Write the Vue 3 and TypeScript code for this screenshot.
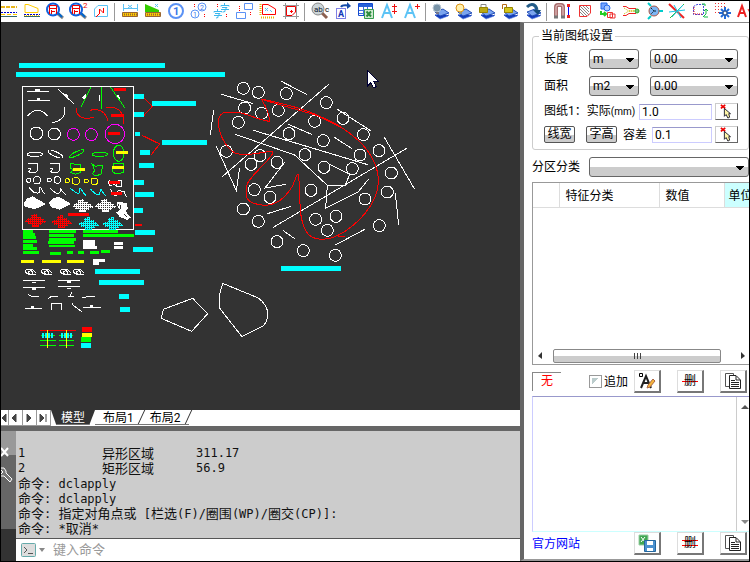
<script setup lang="ts">
import { ref } from 'vue'

interface Shape {
  d?: string
  s?: string
  f?: string
  w?: number
  dash?: string
  t?: string
  x?: number
  y?: number
  size?: number
}
interface Tool {
  name: string
  shapes: Shape[]
  sep?: boolean
}

const line = (d: string, s: string, w = 1, dash?: string): Shape => ({ d, s, w, dash })
const fill = (d: string, f: string, s?: string): Shape => ({ d, f, s })
const text = (t: string, x: number, y: number, size: number, f: string): Shape => ({ t, x, y, size, f })
const circle = (x: number, y: number, r: number) =>
  `M${x - r} ${y}a${r} ${r} 0 1 0 ${2 * r} 0a${r} ${r} 0 1 0 ${-2 * r} 0`

const layers: Shape[] = [
  fill('M4 13L12 11L17 14L9 17Z', '#1238b8', '#7d9be6'),
  fill('M4 10L12 7L18 11L9 14Z', '#7aa4ee', '#2450b8'),
  line('M4 13L9 16L18 13', '#1b47c0', 1),
]
const finder: Shape[] = [
  line('M12 11L18 16', '#888', 3),
  line('M12 10L17 15', '#06c', 2),
  fill(circle(8, 7.5, 6), '#fff', '#1461dc'),
  line(circle(8, 7.5, 6), '#1461dc', 2),
  line('M4.5 12V3.5H11.5V12M4 6.5H12M7 9.5H10M6.5 12V8', '#e00', 1),
]
const ruler: Shape[] = [
  fill('M2.5 10.5H17.5V14.5H2.5Z', '#fc0', '#963'),
  line('M4 12.5H17', '#963', 2, '1 1'),
]

const tools: Tool[] = [
  { name: '线型标注', shapes: [
    line('M2 5H18', '#e8b51c', 2, '4 1'), line('M2 10.5H18', '#00c', 1, '2 1'),
    line('M2 12.5H18', '#fc0', 1, '4 2'), line('M2 14.5H18', '#366'),
  ] },
  { name: '坡面', shapes: [
    line('M3 10.5V2.5H6L16 6.5V10.5Z', '#fc0', 1), line('M2 12.5H18', '#00c', 1, '2 1'),
    line('M2 13.5H18', '#fc0', 1, '1 1'), line('M2 14.5H18', '#366'),
  ] },
  { name: '查找面积', shapes: finder },
  { name: '查找平方', shapes: [...finder, text('2', 15, 6, 8, '#e00')] },
  { name: '编号区域', sep: true, shapes: [
    line('M3.5 14.5V7L7 3.5H16.5V14.5Z', '#5cc3f5', 1), line('M8.5 12V7L12.5 11V6', '#f00'), line('M5 15L8 12', '#f00'),
  ] },
  { name: '量长度', shapes: [
    line('M3.5 2V9M17.5 2V9M4 6.5H17M8 3L12 6M12 3L8 6', '#5cc3f5'), ...ruler,
  ] },
  { name: '量面积', shapes: [
    fill('M2 2L16 8V10H2Z', '#3c0'), line('M12 2L15 5M15 2L12 5', '#5cc3f5'), ...ruler,
  ] },
  { name: '序号', shapes: [line(circle(10, 9, 7), '#5b92f5', 2), text('1', 7, 13, 11, '#3c78e8')] },
  { name: '双序号', shapes: [
    line(circle(13, 5, 4), '#5b92f5'), line(circle(6, 12, 4), '#5b92f5'),
    text('2', 11, 8, 7, '#3c78e8'), text('1', 4, 15, 7, '#3c78e8'),
    line('M5.5 2V6M15.5 12V15', '#f00', 1, '1 1'),
  ] },
  { name: '字序', shapes: [
    line('M12.5 1V3M9 4.5V3.5H17V4.5M10 5.5H15L13 7.5V9.5L11 10M9 7.5H17', '#3cb8ee'),
    line('M5.5 7V9M2 10.5V9.5H10V10.5M3 11.5H8L6 13.5V15.5L4 16M2 13.5H10', '#3cb8ee'),
    line('M5.5 2V6M14.5 12V16', '#f00', 1, '1 1'),
  ] },
  { name: '矩形序', shapes: [
    line('M1.5 10.5H10.5V16.5H1.5ZM9.5 1.5H17.5V7.5H9.5Z', '#5b92f5'), line('M4.5 4V9M15.5 10V14', '#f00', 1, '1 1'),
  ] },
  { name: '区域边长', shapes: [
    line('M4.5 2.5H10L17.5 7V12.5H4.5Z', '#f00', 1), line('M2.5 2V14M3 15.5H17', '#e8b500', 2, '1 1'),
    line('M7 6L10 9M10 6L7 9M12 8L14 10', '#5cc3f5'),
  ] },
  { name: '裁剪框', sep: true, shapes: [
    line('M4.5 1V17M15.5 1V17M2 3.5H18M2 14.5H18', '#999', 1),
    fill('M5.5 4.5H14.5V10L11 13.5H5.5Z', '#fff', '#e00'), line('M10.5 8V11M9 9.5H12', '#f00'),
  ] },
  { name: '查找文字', shapes: [
    line('M12 11L17 16', '#8b6050', 3), fill(circle(8, 7, 6), '#ccd5d8', '#888'), text('ab', 4, 10, 8, '#123'), text('c', 15, 10, 8, '#000'),
  ] },
  { name: '移动文字', shapes: [
    line('M3.5 6.5H12.5V16.5H3.5Z', '#00c', 1, '1 1'), text('A', 5, 15, 9, '#1238b8'),
    line('M8 5C9 3 12 3 15 3.5', '#124aa8', 2), fill('M14 0L18 4L14 7Z', '#124aa8'),
  ] },
  { name: '导出表格', shapes: [
    fill('M2.5 1.5H16.5V13.5H2.5Z', '#fff', '#124ad0'), fill('M3 2H16V5H3Z', '#2862d8'),
    line('M3 8.5H16M3 11.5H16M7.5 5V13M11.5 5V13', '#3e70dd'),
    fill('M8.5 7.5H17.5V16.5H8.5Z', '#cfe8cf', '#369b4f'), line('M10.5 9.5L15 14.5M15 9.5L10.5 14.5', '#2a8a3c', 2),
  ] },
  { name: '文字上下', shapes: [line('M3 16L8 3L13 16M5 11H11', '#5cc3f5', 2), line('M15.5 2V12M13 4.5H18M13 9.5H18', '#e11')] },
  { name: '文字增大', sep: true, shapes: [line('M3 16L8 3L13 16M5 11H11', '#5cc3f5', 2), line('M15.5 2V7M13 4.5H18', '#e11')] },
  { name: '关闭图层', shapes: [...layers, fill(circle(6, 6, 4), '#7994a8', '#bac9d4'), fill('M5 10H8V12H5Z', '#778')] },
  { name: '打开图层', shapes: [...layers, fill(circle(6, 6, 4), '#fff1ad', '#dc9217'), fill('M5 10H8V12H5Z', '#997')] },
  { name: '锁定图层', shapes: [...layers, line('M4 6V2.5H9V6', '#888', 1), fill('M2.5 5.5H10.5V10.5H2.5Z', '#bba916', '#998600')] },
  { name: '解锁图层', shapes: [...layers, line('M2.5 7V2.5H6.5V6', '#b76c16', 1), fill('M4.5 5.5H12.5V10.5H4.5Z', '#d2c51b', '#998600')] },
  { name: '转换图层', sep: true, shapes: [...layers, line('M4 5C9 0 13 3 14 8', '#245c88', 3), fill('M10 8H18L15 13Z', '#124a78')] },
  { name: '磁铁', shapes: [
    line('M4 16V5Q4 3 6 3H9Q11 3 11 5V16', '#a86f6f', 4), line('M4 14V5Q4 3 6 3H9Q11 3 11 5V14', '#edcaca', 1),
    line('M2 15H6M9 15H13', '#777', 3), line('M16.5 3V15', '#00f', 1), line('M15 3.5H18M15 14.5H18', '#e22', 3),
  ] },
  { name: '填充', shapes: [
    line('M5 4L14 13M8 4L14 10M11 4L14 7M5 7L12 14M5 10L9 14', '#888'), line('M4.5 3.5H15.5V11L12 14.5H4.5Z', '#e33', 1),
  ] },
  { name: '复制图形', shapes: [
    fill('M3 1H9V7H3Z', '#75a5ff', '#246bea'), fill(circle(9, 6, 3), '#aac9ff', '#246bea'),
    line('M3 9V12H8M6 10L8 12L6 14', '#2c2', 2), line('M9.5 10.5H14.5V15.5H9.5ZM12 12H17V16H12Z', '#e33'),
  ] },
  { name: '平行线', shapes: [
    line('M2 4.5H5L8 6.5H15M2 13.5H5L8 11.5H15', '#e22', 1), line('M3 6L7 8.5H14M3 12L7 9.5H14', '#cb0', 1, '1 1'),
    fill(circle(16, 9, 2), '#7b8', '#2a2'),
  ] },
  { name: '交点', shapes: [
    line('M4 1L7 4M4 17L7 14M15 9H19', '#0cc', 2), fill(circle(10, 9, 5), '#7bb5f4', '#a54'),
    line('M7 6L10 9L7 12M10 9H13', '#123', 1, '2 1'),
  ] },
  { name: '打断', shapes: [line('M2 2L17 16', '#e22', 2), line('M17 2L3 16', '#3b3', 1), line('M2 10L18 8M7 3L14 16M16 3L5 15', '#18c8e8')] },
  { name: '旋转区域', shapes: [
    line('M3.5 4.5L7 2.5H13.5V12.5H3.5Z', '#44d', 1, '2 1'), line('M4 5V12H13', '#e22', 1, '1 1'),
    line('M12 2H15V4M16 7V12L13 15M14 15H18M16 7L14 9M16 7L18 9', '#1b4', 1),
  ] },
  { name: '炸开', shapes: [
    line('M2.5 1V12M5.5 1V12M8.5 1V8M11.5 1V5', '#e33', 1, '1 2'),
    line('M12 5V17M6 11H18M8 7L16 15M16 7L8 15', '#216bd8', 2), fill(circle(12, 11, 2), '#fff', '#247'),
  ] },
  { name: '文字', shapes: [line('M2 15L6 4L10 15M4 11H8', '#e22', 2), line('M12 7L14 11', '#e22')] },
]

const circles: number[][] = [
  [130, 55], [175, 67], [259, 71], [379, 98], [134, 114], [185, 130], [235, 121], [115, 157], [344, 154], [429, 145],
  [490, 194], [267, 191], [370, 212], [79, 244], [180, 257], [153, 283], [231, 277], [315, 254], [480, 255], [537, 242],
  [372, 292], [457, 296], [574, 309], [163, 359], [210, 382], [333, 361], [562, 366], [495, 387], [130, 417], [175, 454],
  [347, 448], [408, 439], [382, 481], [538, 467], [231, 515], [310, 542], [406, 556],
]

// x, y, width, height of the solid label bars
const cyanBars: number[][] = [
  [19, 63, 146, 5], [16, 72, 209, 5], [134, 94, 10, 5], [152, 101, 44, 5], [134, 112, 10, 5], [135, 132, 5, 4],
  [162, 140, 45, 5], [140, 150, 10, 5], [139, 163, 15, 5], [134, 180, 10, 5], [135, 192, 19, 5], [134, 208, 9, 5],
  [135, 230, 20, 5], [133, 247, 20, 5], [95, 269, 45, 5], [99, 280, 45, 5], [119, 294, 10, 5], [120, 307, 10, 5],
  [281, 266, 60, 5], [81, 343, 10, 5],
]
const greenBars: number[][] = [
  [23, 230, 10, 3], [23, 233, 12, 3], [23, 236, 13, 3], [23, 240, 14, 3], [23, 244, 10, 3], [23, 247, 14, 3], [23, 251, 16, 3],
  [49, 230, 27, 3], [49, 234, 25, 3], [49, 238, 27, 3], [48, 241, 26, 3], [49, 245, 26, 2], [50, 252, 11, 3], [67, 251, 6, 3],
  [83, 230, 35, 3], [83, 234, 51, 3], [78, 251, 6, 3], [90, 251, 9, 3], [101, 250, 9, 3], [81, 337, 10, 5],
]
const yellowBars: number[][] = [
  [21, 260, 13, 3], [42, 260, 19, 3], [67, 260, 17, 3], [116, 151, 12, 3], [112, 166, 12, 3], [73, 168, 12, 3], [82, 333, 10, 4],
]
const redBars: number[][] = [
  [114, 88, 12, 3], [111, 114, 13, 3], [108, 132, 12, 3], [109, 181, 11, 3], [111, 192, 11, 3], [68, 213, 21, 3], [135, 224, 7, 2], [82, 327, 10, 5],
]
const barGroups = [
  { color: 'cyan', bars: cyanBars }, { color: '#0f0', bars: greenBars },
  { color: '#ff0', bars: yellowBars }, { color: 'red', bars: redBars },
]
const blobs = [
  { x: 188, y: 356, color: 'white' }, { x: 256, y: 356, color: 'white' }, { x: 46, y: 401, color: 'red' },
  { x: 124, y: 405, color: 'red' }, { x: 205, y: 411, color: 'cyan' }, { x: 277, y: 411, color: 'cyan' },
]

const lengthUnit = ref('m')
const areaUnit = ref('m2')
const lengthDigits = ref('0.00')
const areaDigits = ref('0.00')
const scale = ref('1.0')
const tolerance = ref('0.1')
const append = ref(false)
const command = ref('')
const result = ref('')

const rows = [['1', '异形区域', '311.17'], ['2', '矩形区域', '56.9']]
const history = ['命令: dclapply', '命令: dclapply', '命令: 指定对角点或 [栏选(F)/圈围(WP)/圈交(CP)]:', '命令: *取消*']
const runs = (s: string) => (s.match(/[\u4e00-\u9fff]+|[^\u4e00-\u9fff]+/g) ?? []).map(t => ({ t, cjk: /[\u4e00-\u9fff]/.test(t) }))
</script>

<template>
  <div class="app">
    <div class="toolbar" role="toolbar">
      <template v-for="tool in tools" :key="tool.name">
        <button class="tool" type="button" :aria-label="tool.name">
          <svg viewBox="0 0 20 20" width="20" height="20">
            <template v-for="(p, i) in tool.shapes" :key="i">
              <text v-if="p.t" :x="p.x" :y="p.y" :font-size="p.size" :fill="p.f" :font-weight="(p.size || 0) > 8 ? 700 : 400">{{ p.t }}</text>
              <path v-else :d="p.d" :stroke="p.s || 'none'" :fill="p.f || 'none'" :stroke-width="p.w || 1" :stroke-dasharray="p.dash" />
            </template>
          </svg>
        </button>
        <i v-if="tool.sep" class="sep"></i>
      </template>
    </div>

    <div class="body">
      <main class="work">
        <div class="canvas">
          <svg class="drawing" viewBox="1 22 519 388" preserveAspectRatio="xMinYMin meet">
            <defs>
              <path id="blob" d="M0 22L9 14H17V4H27V0H34V9H47V16H56V22H62V28H50V34H40V39H19V31H7V25H0Z" />
            </defs>

            <g transform="translate(10 80) scale(.33333)">
              <path class="w" d="M38 19H371V448H38Z" />
              <path class="w" d="M51 34H117M54 61H120M144 27L191 71M268 44V63M52 109Q82 73 113 108M163 80Q171 120 127 128" />
              <path class="g" d="M242 22L214 80M274 22V87M302 22L344 83" />
              <path class="s" d="M75 27H90V34H75ZM80 54H91V60H80ZM160 42L169 41L177 48L172 52ZM217 52L228 42L230 52L222 59ZM319 45L327 46L330 57L323 52Z" />
              <path class="r" d="M198 85C199 110 217 120 251 112M240 91C270 83 290 100 293 122M288 84C325 76 343 98 341 131" />
              <path class="w" :d="circle(79, 160, 19) + circle(133, 162, 18)" />
              <path class="m" :d="circle(190, 163, 18) + circle(244, 164, 18) + circle(315, 162, 29)" />
              <g class="w">
                <ellipse cx="75" cy="223" rx="23" ry="6" /><ellipse cx="136" cy="222" rx="24" ry="7" transform="rotate(25 136 222)" />
                <path d="M55 251H83V270Q76 283 55 275L62 267L55 266M121 251H149V270Q142 283 121 275L128 267L121 266" />
                <path :d="circle(56, 301, 6) + circle(81, 301, 11) + circle(118, 300, 6) + circle(142, 300, 10)" />
                <path d="M57 322C72 337 67 338 80 339C98 342 83 322 89 322C99 322 90 332 104 341M121 324C141 348 155 343 150 325C156 327 150 332 167 343M302 328C312 350 320 354 324 332L342 334L350 352M300 301C292 307 300 318 300 318H307M310 312C320 320 319 317 325 302L334 301V319L318 318" />
              </g>
              <g class="g">
                <ellipse cx="200" cy="221" rx="24" ry="6" transform="rotate(-25 200 221)" /><ellipse cx="270" cy="223" rx="23" ry="6" /><ellipse cx="326" cy="220" rx="16" ry="24" />
                <path d="M181 251L211 254V278Q192 287 182 277L190 269L180 264ZM247 253L256 259L278 255L274 282Q254 291 247 281L254 272ZM310 251H341V276Q319 288 308 275Z" />
              </g>
              <path class="y" :d="circle(172, 302, 6) + circle(197, 303, 11) + circle(229, 303, 6) + circle(253, 304, 10)" />
              <path class="c" d="M180 324C201 341 210 348 210 326C218 327 212 333 227 346M241 327C264 352 272 347 270 328C278 326 273 337 287 346" />
              <path class="s" d="M42 368L52 355L68 349L108 372L74 388L43 379ZM117 369L128 355L146 350L184 372L149 389L124 382ZM319 368L332 366L350 370L354 385L347 394L362 413L352 420L329 411L319 398L330 388L323 380Z" />
              <path class="gap" d="M333 376V388M342 402L351 410M326 372V378" />
              <g v-for="(b, i) in blobs" :key="i" :transform="`translate(${b.x} ${b.y})`">
                <use href="#blob" :fill="b.color" />
                <path class="gap holes" d="M0 4H62M0 10H62M0 16H62M0 22H62M0 28H62M0 34H62" />
              </g>
            </g>

            <g transform="translate(10 225) scale(.33333)">
              <path class="s" d="M219 45H255V63H261V72H219ZM312 51H339V60H312ZM312 63H339V72H312ZM249 102H285V111H267V120H249Z" />
              <g v-for="x in [48, 96, 153, 192]" :key="x" class="w" :transform="`translate(${x} 132)`">
                <path d="M1 3Q11 -3 24 5M0 3V11Q10 20 18 15L30 16M8 7L16 5L21 12L17 16L8 14ZM24 7L30 11" />
              </g>
              <path class="w" d="M39 168H105M39 187H105M144 168H210M144 186H210M54 207C63 216 72 216 87 216M114 221L123 215H144M174 214L192 215M185 202L180 217M216 217L255 214M45 250H96M124 254V237H155V254M189 233L188 240L215 260M219 247H273" />
              <path class="s" d="M65 170H78V174H65ZM66 188H78V194H66ZM171 169H183V174H171ZM171 188H183V192H171ZM63 243H72V249H63ZM135 233H144V238H135ZM240 240H249V246H240Z" />
              <path class="r" d="M90 317H198" />
              <path class="g" d="M93 331H135M90 346H138M90 361H138M147 331H189M147 346H192M147 361H192" />
              <path class="c ticks" d="M96 331H132M153 331H189" />
              <path class="y" d="M113 315V370M169 315V370" />
            </g>

            <g transform="translate(130 75) scale(.33333)">
              <path class="r" d="M42 69L67 94L42 121M36 181L89 207L64 239" />
            </g>

            <g v-for="group in barGroups" :key="group.color" :fill="group.color">
              <rect v-for="(b, i) in group.bars" :key="i" :x="b[0]" :y="b[1]" :width="b[2]" :height="b[3]" />
            </g>

            <g transform="translate(200 70) scale(.33333)">
              <circle v-for="(c, i) in circles" :key="i" class="w" :cx="c[0]" :cy="c[1]" r="18" />
              <path class="w" d="M244 34L320 73M386 43L67 320M64 73L160 101M41 121L31 194M412 118L512 182M265 163L335 193M106 193L284 255L382 346L435 348L449 313L386 281M160 181L503 284M403 202L456 236M553 202L643 356M620 235L220 472M49 229L109 362L119 294M254 277L195 354L258 343M382 346L377 414L475 365L506 327M586 370L596 464M202 431L274 409M250 482L284 506M406 525L494 478" />
              <path class="r" d="M184 87C270 105 315 118 350 135C430 166 535 235 535 335C535 405 465 470 414 496C380 512 345 512 325 493C292 453 303 385 296 320C293 296 285 335 276 350C252 390 227 404 198 406C160 405 139 392 139 376V352C141 328 184 294 209 263C225 243 222 242 198 246C155 253 120 259 100 246C75 228 55 190 55 156C56 139 65 127 77 127H112C147 132 170 149 208 154C209 133 198 109 184 87M414 499H435" />
              <path class="r" d="M184 88L350 136L425 174" />
              <path d="M503 2V47L512 38L520 54L529 50L521 35L535 34Z" fill="white" stroke="#003" />
            </g>
            <g transform="translate(150 250) scale(.33333)">
              <path class="w" d="M128 145L173 191L125 244L34 205L40 178ZM218 100L325 144Q354 165 353 195Q353 214 338 229L276 260L210 176L209 132Z" />
            </g>
          </svg>
        </div>

        <nav class="tabs">
          <button type="button" class="nav" aria-label="第一个"><svg viewBox="0 0 10 14"><path d="M5 3V11L1 7Z" /></svg></button>
          <button type="button" class="nav" aria-label="上一个"><svg viewBox="0 0 10 14"><path d="M6 3V11L2 7Z" /></svg></button>
          <button type="button" class="nav" aria-label="下一个"><svg viewBox="0 0 10 14"><path d="M3 3V11L7 7Z" /></svg></button>
          <button type="button" class="nav" aria-label="最后一个"><svg viewBox="0 0 10 14"><path d="M2 3V11L6 7ZM8 3V11" /></svg></button>
          <button type="button" class="tab active">模型</button>
          <button type="button" class="tab">布局1</button>
          <button type="button" class="tab">布局2</button>
        </nav>

        <section class="console">
          <div class="grip">
            <button type="button" aria-label="关闭"><svg viewBox="0 0 14 14" width="14" height="14"><path d="M0 3L7 11M7 3L0 11" stroke="white" stroke-width="2" /></svg></button>
            <button type="button" aria-label="自定义"><svg viewBox="0 0 14 16" width="14" height="16"><path d="M0 1H3L5 4V6L11 12L9 15L3 9H0" fill="#777" stroke="white" stroke-width="1" /><path d="M0 3L2 5L0 7" stroke="#fff" fill="none" /></svg></button>
          </div>
          <div class="log">
            <div class="lines">
              <div v-for="row in rows" :key="row[0]" class="entry">
                <span>{{ row[0] }}</span><span class="cjk">{{ row[1] }}</span><span>{{ row[2] }}</span>
              </div>
              <p v-for="(item, i) in history" :key="i"><span v-for="(r, j) in runs(item)" :key="j" :class="{ cjk: r.cjk }">{{ r.t }}</span></p>
            </div>
            <label class="prompt">
              <svg viewBox="0 0 15 14" width="15" height="14"><rect x=".5" y=".5" width="14" height="13" rx="1" fill="#ddd" stroke="#6aa" /><path d="M3 4L6 7L3 10M7 10.5H12" fill="none" stroke="#555" /></svg>
              <svg viewBox="0 0 6 4" width="6" height="4"><path d="M0 0H6L3 4Z" fill="#888" /></svg>
              <input v-model="command" type="text" placeholder="键入命令" aria-label="键入命令" />
            </label>
          </div>
        </section>
      </main>

      <aside class="panel">
        <fieldset>
          <legend>当前图纸设置</legend>
          <div class="units">
            <label for="len">长度</label>
            <select id="len" v-model="lengthUnit"><option>m</option><option>mm</option></select>
            <select v-model="lengthDigits" aria-label="长度精度"><option>0.00</option><option>0.0</option></select>
            <label for="area">面积</label>
            <select id="area" v-model="areaUnit"><option>m2</option><option>mm2</option></select>
            <select v-model="areaDigits" aria-label="面积精度"><option>0.00</option><option>0.0</option></select>
          </div>
          <div class="measure">
            <label for="scale">图纸1：实际<small>(mm)</small></label>
            <input id="scale" v-model="scale" type="text" />
            <button type="button" class="pick" aria-label="拾取比例"><svg viewBox="0 0 16 15"><path d="M1 0L6 4M6 0L1 4" stroke="#e00" stroke-width="2" /><path d="M5 4V13L7 11L9 15L11 14L10 10H12Z" fill="#fff6a8" stroke="#112" /></svg></button>
          </div>
          <div class="measure second">
            <button type="button" class="soft">线宽</button>
            <button type="button" class="soft">字高</button>
            <label for="tol">容差</label>
            <input id="tol" v-model="tolerance" type="text" />
            <button type="button" class="pick" aria-label="拾取容差"><svg viewBox="0 0 16 15"><path d="M1 0L6 4M6 0L1 4" stroke="#e00" stroke-width="2" /><path d="M5 4V13L7 11L9 15L11 14L10 10H12Z" fill="#fff6a8" stroke="#112" /></svg></button>
          </div>
        </fieldset>

        <div class="category">
          <label for="cat">分区分类</label>
          <select id="cat"><option></option></select>
        </div>

        <div class="list">
          <table>
            <thead><tr><th class="mark"></th><th class="kind">特征分类</th><th class="value">数值</th><th class="unit">单位</th></tr></thead>
          </table>
          <div class="scroll">
            <svg viewBox="0 0 5 8" width="5" height="8"><path d="M4 0V7L0 4Z" fill="#333" /></svg>
            <div class="thumb"></div>
            <svg viewBox="0 0 5 8" width="5" height="8"><path d="M1 0V7L5 4Z" fill="#333" /></svg>
          </div>
        </div>

        <div class="actions">
          <span class="state">无</span>
          <label class="append"><input v-model="append" type="checkbox" />追加</label>
          <button type="button" class="raised" aria-label="编辑文字">
            <svg viewBox="0 0 18 18" width="18" height="18"><path d="M1.5 1.5H4.5V4.5H1.5Z" fill="none" stroke="#000" /><path d="M3 16L8 4L13 16M5 11H11" fill="none" stroke="#222" stroke-width="2" /><path d="M9 16L10 13L15 7L17 9L12 15Z" fill="#f6b63c" stroke="#a64" /></svg>
          </button>
          <button type="button" class="raised strike">删</button>
          <button type="button" class="raised" aria-label="复制">
            <svg viewBox="0 0 18 18" width="18" height="18"><path d="M1.5 1.5H9.5V14.5H1.5Z" fill="#fff" stroke="#555" /><path d="M5.5 3.5H12L16.5 8V16.5H5.5Z" fill="#fff" stroke="#222" /><path d="M12 4V8H16M7 8.5H11M7 10.5H15M7 12.5H15M7 14.5H15" fill="none" stroke="#222" /></svg>
          </button>
        </div>

        <div class="output">
          <textarea v-model="result" aria-label="结果"></textarea>
          <div class="rail"><i class="up"></i><i class="down"></i></div>
        </div>

        <div class="actions footer">
          <a href="#">官方网站</a>
          <button type="button" class="raised" aria-label="导出">
            <svg viewBox="0 0 18 18" width="18" height="18"><path d="M1 1H10V11H1Z" fill="#41a853" stroke="#9ccea5" /><path d="M3 3L7 8M7 3L3 8" stroke="#fff" /><path d="M6.5 6.5H17.5V17.5H6.5Z" fill="#4b91cf" stroke="#25679d" /><path d="M9 7H15V11H9ZM9 14H15V17H9Z" fill="#fff" /></svg>
          </button>
          <button type="button" class="raised strike twice">删</button>
          <button type="button" class="raised" aria-label="复制结果">
            <svg viewBox="0 0 18 18" width="18" height="18"><path d="M1.5 1.5H9.5V14.5H1.5Z" fill="#fff" stroke="#555" /><path d="M5.5 3.5H12L16.5 8V16.5H5.5Z" fill="#fff" stroke="#222" /><path d="M12 4V8H16M7 8.5H11M7 10.5H15M7 12.5H15M7 14.5H15" fill="none" stroke="#222" /></svg>
          </button>
        </div>
      </aside>
    </div>
  </div>
</template>

<style>
body { margin: 0; }
</style>

<style scoped>
* { box-sizing: border-box; }
.app {
  display: flex;
  flex-direction: column;
  height: 100vh;
  overflow: hidden;
  border: 1px solid #000;
  background: #fff;
  color: #000;
  font: 12px/16px Roboto, "Noto Sans CJK SC", sans-serif;
}
button, input, select, textarea { margin: 0; font: inherit; color: inherit; border-radius: 0; }
button { padding: 0; border: 0; background: none; }
svg { display: block; flex: none; }

.toolbar { display: flex; flex: 0 0 21px; overflow: hidden; padding-top: 1px; }
.tool { flex: 0 0 23px; display: flex; justify-content: center; }
.tool:first-child { margin-left: -4px; }
.sep { flex: 0 0 6px; height: 18px; margin: 1px -2px 0 2px; border-left: 1px solid #999; }

.body { flex: 1; display: flex; min-height: 0; }
.work { flex: 1; display: flex; flex-direction: column; min-width: 0; }
.canvas { flex: 1; min-height: 0; background: #333; }
.drawing { width: 100%; height: 100%; shape-rendering: crispEdges; }
.drawing path, .drawing ellipse, .drawing circle { vector-effect: non-scaling-stroke; }
.w, .g, .r, .m, .c, .y, .gap { fill: none; stroke-width: 1px; }
.w { stroke: #fff; }
.g { stroke: #0f0; }
.r { stroke: #f00; }
.m { stroke: #f0f; }
.c { stroke: #0ff; }
.y { stroke: #ff0; }
.s { fill: #fff; }
.gap { stroke: #333; }
.holes { stroke-dasharray: 1 1; }
.ticks { stroke-width: 5px; stroke-dasharray: 2 1; }

.tabs { flex: 0 0 21px; display: flex; background: #fff; border-bottom: 5px solid #666; }
.nav { flex: 0 0 14px; min-width: 0; overflow: hidden; border: 1px solid #999; border-width: 0 1px 1px 0; }
.nav:first-child { flex-basis: 8px; }
.nav svg { width: 10px; height: 14px; margin-left: 1px; }
.nav:first-child svg { margin-left: 0; }
.nav path { fill: #444; stroke: #444; }
.tab { position: relative; height: 15px; padding: 2px 8px 0; line-height: 13px; border-bottom: 1px solid #777; }
.tab::after { content: ""; position: absolute; right: 0; top: 0; height: 14px; border-right: 1px solid #333; transform: skewX(-25deg); }
.tab.active { padding: 2px 10px 0; background: #333; color: #fff; clip-path: polygon(0 0, 100% 0, 87% 100%, 12% 100%); }

.console { flex: 0 0 130px; display: flex; }
.grip { flex: 0 0 15px; display: flex; flex-direction: column; gap: 8px; padding-top: 14px; background: linear-gradient(#999 0 24px, #666 24px 98px, #333 98px); }
.log { flex: 1; display: flex; flex-direction: column; min-width: 0; background: #ccc; }
.lines { flex: 1; padding: 15px 2px 0; font: 12px/15px "DejaVu Sans Mono", "Noto Sans CJK SC", monospace; color: #111; border-bottom: 1px solid #555; }
.lines p { margin: 0; height: 15px; white-space: pre; }
.lines .cjk { font-size: 13px; }
.entry { display: grid; grid-template-columns: 84px 94px 1fr; height: 15px; }
.prompt { flex: 0 0 22px; display: flex; align-items: center; gap: 3px; padding: 0 5px; background: #fff; }
.prompt input { flex: 1; min-width: 0; margin-left: 5px; padding: 0; border: 0; outline: 0; font-size: 13px; }
.prompt input::placeholder { color: #999; opacity: 1; }

.panel { flex: 0 0 229px; display: flex; flex-direction: column; padding: 6px 0 4px 8px; border-left: 4px solid #666; border-top: 1px solid #888; border-bottom: 2px solid #999; overflow: hidden; }
fieldset { flex: none; min-width: 0; margin: 0; padding: 6px 10px 2px 11px; border: 1px solid #ccc; border-radius: 3px; height: 121px; }
legend { margin-left: -5px; padding: 0 2px; line-height: 14px; }
.units { display: grid; grid-template-columns: 34px 50px 1fr; column-gap: 11px; row-gap: 7px; align-items: center; }
select {
  appearance: none;
  min-width: 0;
  height: 20px;
  padding: 0 3px;
  border: 1px solid #666;
  border-radius: 3px;
  line-height: 18px;
  background: linear-gradient(to top right, transparent 50%, #000 50%) right 8px top 8px / 4px 4px no-repeat,
    linear-gradient(to top left, transparent 50%, #000 50%) right 4px top 8px / 4px 4px no-repeat,
    linear-gradient(#fff 50%, #ccc 50%);
}
.measure { display: flex; align-items: center; gap: 3px; height: 17px; margin-top: 7px; }
.measure label { flex: 0 0 92px; white-space: nowrap; }
.measure small { font-size: 10px; }
.measure input { flex: 1; min-width: 0; height: 16px; padding: 0 2px; border: 1px solid #ccf; border-top-color: #99c; outline: 0; }
.second { margin-top: 6px; }
.measure.second label { flex: 0 0 26px; margin-left: 3px; }
.soft { flex: 0 0 31px; height: 17px; margin-right: 8px; border: 1px solid #555; border-radius: 2px; background: linear-gradient(#fff 50%, #ccc 50%); line-height: 15px; }
.soft + .soft { margin-right: 0; }
.pick { flex: 0 0 23px; height: 17px; border: 1px solid #ccc; border-right-color: #666; border-bottom-color: #666; display: flex; justify-content: center; }
.pick svg { width: 14px; height: 15px; }
.category { flex: none; display: flex; align-items: center; gap: 9px; margin-top: 7px; }
.category select { flex: 1; }

.list { flex: 0 0 183px; display: flex; flex-direction: column; justify-content: space-between; margin-top: 5px; border: 1px solid #999; border-right: 0; }
table { width: 260px; table-layout: fixed; border-collapse: collapse; }
th { height: 24px; padding: 2px 6px 0; border: 0 solid #ddd; border-width: 0 1px 1px 0; font-weight: normal; text-align: left; }
.mark { width: 26px; }
.kind { width: 100px; }
.value { width: 65px; }
.unit { padding-left: 4px; background: #cff; border-left: 1px solid #6cc; }
.scroll { display: flex; align-items: center; gap: 10px; height: 16px; padding: 0 4px 0 5px; }
.thumb {
  flex: 1;
  height: 14px;
  margin-right: 9px;
  border: 1px solid #888;
  border-radius: 2px;
  background: linear-gradient(90deg, #444 0 1px, transparent 1px 3px, #444 3px 4px, transparent 4px 6px, #444 6px 7px, transparent 7px) center / 7px 6px no-repeat,
    linear-gradient(#fff 50%, #ccc 50%);
}

.actions { flex: none; display: grid; grid-template-columns: 41px 29px 27px 27px 27px; column-gap: 16px; align-items: center; height: 23px; margin-top: 5px; }
.state { width: 29px; height: 19px; padding-left: 8px; border: 1px solid #888; border-right: 0; border-bottom: 0; color: #f00; line-height: 16px; }
.append { display: flex; align-items: center; gap: 2px; white-space: nowrap; }
.append input { appearance: none; flex: none; width: 13px; height: 13px; border: 1px solid #999; background: linear-gradient(135deg, #bcc 50%, #fff 50%); box-shadow: inset 0 0 0 2px #fff; }
.raised { width: 27px; height: 23px; display: grid; place-items: center; border: 1px solid #ddd; border-right: 2px solid #777; border-bottom: 2px solid #777; }
.strike { background: linear-gradient(red, red) center / 16px 1px no-repeat; }
.twice { background: linear-gradient(red, red) center 7px / 16px 1px no-repeat, linear-gradient(red, red) center 12px / 16px 1px no-repeat; }
.output { flex: 1; min-height: 0; display: flex; margin-top: 3px; border: 1px solid #ccf; border-top-color: #99c; border-bottom-color: #cff; border-right: 0; }
textarea { flex: 1; min-width: 0; padding: 2px; border: 0; outline: 0; resize: none; background: #fff; }
.rail { flex: 0 0 9px; display: flex; flex-direction: column; justify-content: space-between; padding: 8px 0 7px 4px; border-left: 1px solid #ccc; }
.rail i { width: 0; border: solid transparent; border-width: 0 4px; }
.rail .up { border-bottom: 4px solid #555; }
.rail .down { border-top: 4px solid #888; }
.footer { margin-top: 0; }
.footer a { grid-column: 1 / 3; color: #00f; text-decoration: none; white-space: nowrap; }
</style>
